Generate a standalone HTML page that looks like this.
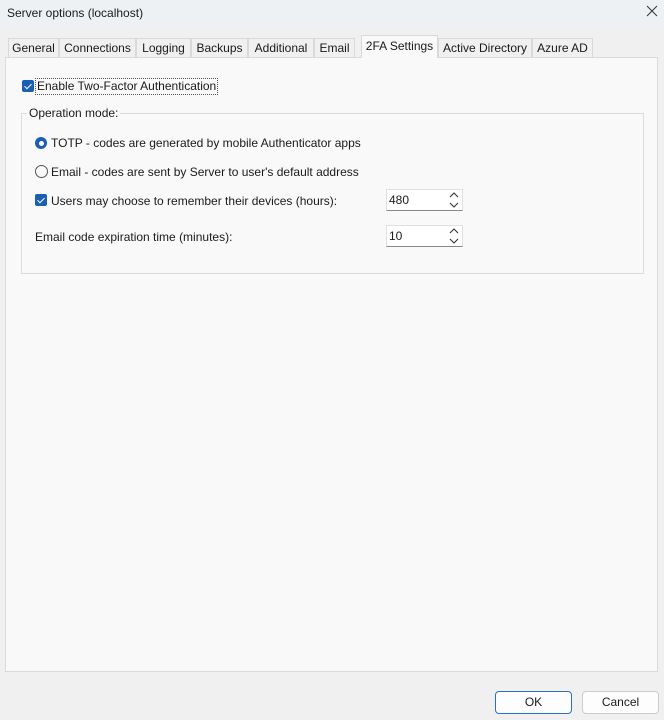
<!DOCTYPE html>
<html><head><style>
body{margin:0;width:664px;height:720px;background:#f0f0f0;font-family:"Liberation Sans",sans-serif;font-size:12px;color:#1a1a1a;position:relative;overflow:hidden}
.a{position:absolute;white-space:nowrap}
.title{left:0;top:0;width:664px;height:28px;background:#eef1f4}
.tab{position:absolute;top:38px;height:19px;border:1px solid #d9d9d9;border-bottom:none;background:#f0f0f0;font-size:12px;line-height:19px;text-align:center;box-sizing:border-box}
.panel{left:5px;top:57px;width:653px;height:615px;background:#f9f9f9;border:1px solid #dadada;box-sizing:border-box}
.cb{position:absolute;width:12px;height:12px;background:#1a5fb4;border-radius:2px}
.cb:after{content:"";position:absolute;left:4px;top:1.5px;width:3px;height:6px;border:solid #fff;border-width:0 1.3px 1.3px 0;transform:rotate(45deg)}
.spin{position:absolute;width:77px;height:22px;background:#fff;border:1px solid #e0e0e0;border-bottom:1px solid #888;box-sizing:border-box;padding:3px 0 0 2px;font-size:12px}
.btn{position:absolute;top:691px;height:23px;border:1px solid #ccc;border-radius:4px;background:#fdfdfd;text-align:center;line-height:21px;box-sizing:border-box}
</style></head><body>
<div class="a title"></div>
<div class="a" style="left:7px;top:6px;font-size:12px">Server options (localhost)</div>
<svg class="a" style="left:646px;top:5px" width="12" height="12"><path d="M1 1L11 11M11 1L1 11" stroke="#333" stroke-width="1"/></svg>
<div class="a panel"></div>
<div class="tab" style="left:8px;width:51px">General</div>
<div class="tab" style="left:59px;width:77px">Connections</div>
<div class="tab" style="left:136px;width:55px">Logging</div>
<div class="tab" style="left:191px;width:57px">Backups</div>
<div class="tab" style="left:248px;width:66px">Additional</div>
<div class="tab" style="left:314px;width:41px">Email</div>
<div class="tab" style="left:361px;top:35px;height:23px;width:77px;background:#f9f9f9;line-height:20px">2FA Settings</div>
<div class="tab" style="left:438px;width:94px">Active Directory</div>
<div class="tab" style="left:532px;width:61px">Azure AD</div>

<div class="cb" style="left:22px;top:80px"></div>
<div class="a" style="left:35px;top:78px;border:1px dotted #555;padding:0 1px;font-size:12px;line-height:15px">Enable Two-Factor Authentication</div>

<div class="a" style="left:21px;top:113px;width:623px;height:161px;border:1px solid #dcdcdc;box-sizing:border-box"></div>
<div class="a" style="left:27px;top:106px;background:#f9f9f9;padding:0 2px;font-size:12px">Operation mode:</div>

<div class="a" style="left:35px;top:137px;width:12px;height:12px;border-radius:50%;background:#1a5fb4"><div style="position:absolute;left:3.5px;top:3.5px;width:5px;height:5px;border-radius:50%;background:#fff"></div></div>
<div class="a" style="left:51px;top:136px">TOTP - codes are generated by mobile Authenticator apps</div>
<div class="a" style="left:35px;top:165px;width:11px;height:11px;border-radius:50%;border:1px solid #555"></div>
<div class="a" style="left:51px;top:165px">Email - codes are sent by Server to user's default address</div>
<div class="cb" style="left:35px;top:194px"></div>
<div class="a" style="left:51px;top:194px">Users may choose to remember their devices (hours):</div>
<div class="spin" style="left:386px;top:189px">480</div>
<svg class="a" style="left:448px;top:192px" width="12" height="16"><path d="M2 5L6 1L10 5M2 11L6 15L10 11" fill="none" stroke="#333" stroke-width="1.1"/></svg>
<div class="a" style="left:35px;top:230px">Email code expiration time (minutes):</div>
<div class="spin" style="left:386px;top:225px">10</div>
<svg class="a" style="left:448px;top:228px" width="12" height="16"><path d="M2 5L6 1L10 5M2 11L6 15L10 11" fill="none" stroke="#333" stroke-width="1.1"/></svg>

<div class="btn" style="left:495px;width:77px;border-color:#2a6fc0">OK</div>
<div class="btn" style="left:582px;width:77px">Cancel</div>
</body></html>
